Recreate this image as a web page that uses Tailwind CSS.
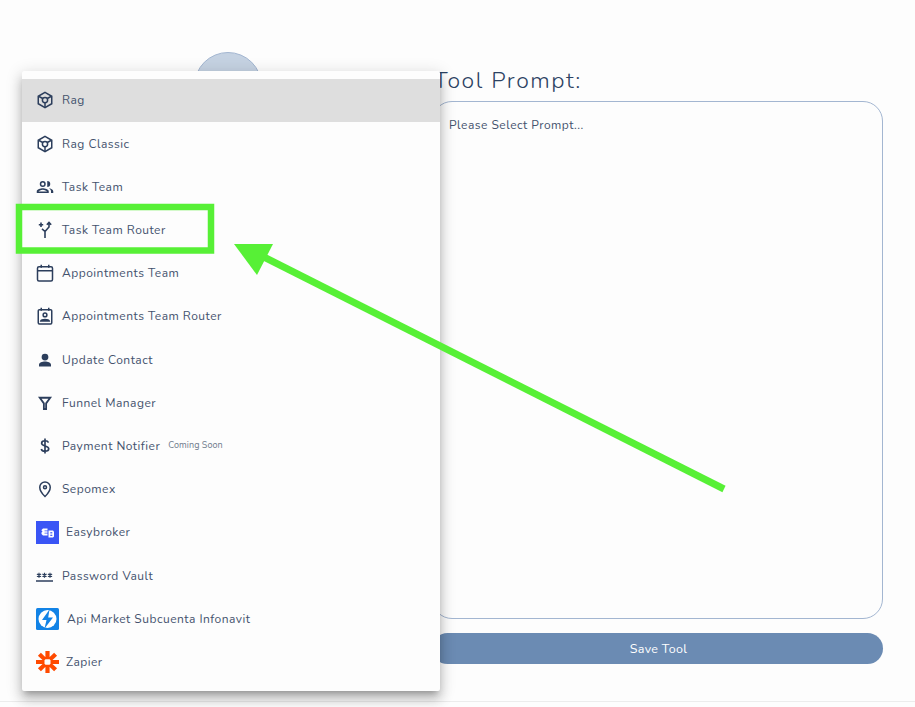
<!DOCTYPE html>
<html lang="en">
<head>
<meta charset="utf-8">
<title>Tool</title>
<script src="https://cdn.jsdelivr.net/npm/@tailwindcss/browser@4"></script>
</head>
<body class="bg-[#fdfdfd] font-['Nunito','Open_Sans','Noto_Sans',sans-serif] text-[#44526d] overflow-hidden">
<div class="relative w-[915px] h-[707px] overflow-hidden">

  <!-- page behind the menu -->
  <main class="h-[702px] border-b border-[#ececec] flex pt-[52px]">
    <div class="w-[432px] flex justify-end pr-[170px] shrink-0">
      <div class="w-[68px] h-[68px] rounded-full bg-[#c5d2e2] border border-[#a3b6d1]"></div>
    </div>
    <div class="w-[451px] flex flex-col">
      <h2 class="ml-[2px] mt-[12px] h-[37px] text-[23px] leading-[33px] font-light tracking-[1.55px] text-[#2c4263]">Tool Prompt:</h2>
      <div class="h-[518px] rounded-[20px] border border-[#a3b6d1] pl-[16px] pr-[17px] py-[14px] text-[12px] leading-[18px] tracking-[0.48px]">Please Select Prompt...</div>
      <button class="mt-[14px] h-[31px] pl-[2px] pt-[1px] rounded-full bg-[#6b8bb3] text-white text-[12.5px] tracking-[0.3px]">Save Tool</button>
    </div>
  </main>

  <!-- dropdown -->
  <ul class="absolute left-[22px] top-[71px] w-[418px] h-[620px] pt-[7.9px] bg-[#fdfdfd] rounded-[2px] shadow-[0_5px_6px_-3px_rgba(0,0,0,0.25),0_9px_12px_1px_rgba(0,0,0,0.16),0_3px_16px_2px_rgba(0,0,0,0.12)] text-[12px] tracking-[0.48px]">
    <li class="h-[43.2px] flex items-center pl-[14px] gap-[8px] bg-[#dedede]">
      <svg class="w-[18px] h-[18px]" viewBox="0 0 24 24" fill="none" stroke="#2c3e5c" stroke-width="2"><path d="M12 1.800l9 5.200v10l-9 5.200L3 17V7z"/><circle cx="12" cy="12" r="3.500"/><path d="M12 15.500v6M9 10L4 7.300M15 10l5-2.700"/></svg>
      <span>Rag</span>
    </li>
    <li class="h-[43.2px] flex items-center pl-[14px] gap-[8px]">
      <svg class="w-[18px] h-[18px]" viewBox="0 0 24 24" fill="none" stroke="#2c3e5c" stroke-width="2"><path d="M12 1.800l9 5.200v10l-9 5.200L3 17V7z"/><circle cx="12" cy="12" r="3.500"/><path d="M12 15.500v6M9 10L4 7.300M15 10l5-2.700"/></svg>
      <span>Rag Classic</span>
    </li>
    <li class="h-[43.2px] flex items-center pl-[14px] gap-[8px]">
      <svg class="w-[18px] h-[18px]" viewBox="0 0 24 24" fill="#2c3e5c"><path d="M9 12a4 4 0 1 0 0-8 4 4 0 0 0 0 8zm0-6a2 2 0 1 1 0 4 2 2 0 0 1 0-4zM9 13.500c-2.700 0-8 1.300-8 4V20h16v-2.500c0-2.700-5.300-4-8-4zM3.300 18c.6-.9 3.300-2.500 5.700-2.500s5.100 1.600 5.700 2.500zM15 4v8a4 4 0 0 0 0-8zM17 13.600c1.700.9 3 2.200 3 3.900V20h3v-2.500c0-2.200-3.300-3.500-6-3.900z"/></svg>
      <span>Task Team</span>
    </li>
    <li class="h-[43.2px] flex items-center pl-[14px] gap-[8px]">
      <svg class="w-[18px] h-[18px]" viewBox="0 0 18 18" fill="none" stroke="#2c3e5c" stroke-width="1.600"><path d="M9 17v-6.500l4-4.500V1.500M10.800 3.800L13 1.500l2.200 2.300M9 10.500L6 7.800M5 1.500v4.400M2.800 3.700h4.400"/></svg>
      <span>Task Team Router</span>
    </li>
    <li class="h-[43.2px] flex items-center pl-[14px] gap-[8px]">
      <svg class="w-[18px] h-[18px]" viewBox="0 0 24 24" fill="none" stroke="#2c3e5c" stroke-width="2"><rect x="2" y="3.500" width="20" height="19" rx="2"/><path d="M2 9h20M7 1v4M17 1v4"/></svg>
      <span>Appointments Team</span>
    </li>
    <li class="h-[43.2px] flex items-center pl-[14px] gap-[8px]">
      <svg class="w-[18px] h-[18px]" viewBox="0 0 24 24" fill="none" stroke="#2c3e5c" stroke-width="2"><rect x="3" y="3.500" width="18" height="19" rx="1.500"/><path d="M7 1v4M17 1v4"/><circle cx="12" cy="10.500" r="2.500"/><path d="M6.500 18.500c1-2.500 10-2.500 11 0z" fill="#2c3e5c"/></svg>
      <span>Appointments Team Router</span>
    </li>
    <li class="h-[43.2px] flex items-center pl-[14px] gap-[8px]">
      <svg class="w-[18px] h-[18px]" viewBox="0 0 24 24" fill="#2c3e5c"><circle cx="12" cy="8" r="4.500"/><path d="M12 14c-3.500 0-8 1.600-8 4.300V20.500h16v-2.200c0-2.700-4.500-4.300-8-4.300z"/></svg>
      <span>Update Contact</span>
    </li>
    <li class="h-[43.2px] flex items-center pl-[14px] gap-[8px]">
      <svg class="w-[18px] h-[18px]" viewBox="0 0 24 24" fill="none" stroke="#2c3e5c" stroke-width="2.400"><path d="M5 5h14l-5.500 7.500V20h-3v-7.500z"/></svg>
      <span>Funnel Manager</span>
    </li>
    <li class="h-[43.2px] flex items-center pl-[14px] gap-[8px]">
      <svg class="w-[18px] h-[18px]" viewBox="0 0 24 24" fill="none" stroke="#2c3e5c" stroke-width="2.200"><path d="M12 2v20M16.500 7.500C16 5.800 14.500 5 12 5 9.300 5 7.500 6.300 7.500 8.300c0 4.700 9.500 2.500 9.500 7.400 0 2-2 3.300-5 3.300-2.700 0-4.500-1-5-3"/></svg>
      <span>Payment Notifier</span>
      <span class="text-[9px] tracking-[0.05px] text-[#6f7b8c]">Coming Soon</span>
    </li>
    <li class="h-[43.2px] flex items-center pl-[14px] gap-[8px]">
      <svg class="w-[18px] h-[18px]" viewBox="0 0 24 24" fill="none" stroke="#2c3e5c" stroke-width="2"><path d="M12 22s-7-7-7-12.500a7 7 0 0 1 14 0C19 15 12 22 12 22z"/><circle cx="12" cy="9.500" r="2"/></svg>
      <span>Sepomex</span>
    </li>
    <li class="h-[43.2px] flex items-center pl-[14px] gap-[7px]">
      <svg class="w-[23px] h-[23px]" viewBox="0 0 23 23"><rect width="23" height="23" fill="#3a55f5"/><path d="M7 7.500h4.500v2H8.500v.700h3v1.600h-3v.700h3v2H7l-1.500-1.500v-1.500l1-1-1-1V9z" fill="#fff"/><path d="M12.500 9.500H17l1 1v5l-1 1h-4.500z" fill="#fff"/><rect x="14.300" y="11.200" width="2" height="1.200" fill="#3a55f5"/><rect x="14.300" y="13.700" width="2" height="1.200" fill="#3a55f5"/></svg>
      <span>Easybroker</span>
    </li>
    <li class="h-[43.2px] flex items-center pl-[14px] gap-[9px]">
      <svg class="w-[17px] h-[18px]" viewBox="0 0 17 18" fill="none" stroke="#2c3e5c"><path d="M0 14h17" stroke-width="1.500"/><path d="M3 5.800v5M.9 7l4.200 2.400M5.100 7L.9 9.400M8.500 5.800v5M6.400 7l4.200 2.400M10.600 7L6.400 9.400M14 5.800v5M11.900 7l4.200 2.400M16.100 7l-4.200 2.400" stroke-width="1.200"/></svg>
      <span>Password Vault</span>
    </li>
    <li class="h-[43.2px] flex items-center pl-[14px] gap-[8px]">
      <svg class="w-[23px] h-[22px]" viewBox="0 0 23 22"><rect width="23" height="22" rx="1.500" fill="#1283e6"/><circle cx="11.500" cy="11" r="9" fill="#fff"/><path d="M13.500 1.500L6 12h4.500L8.500 20.500 17 9.500h-4.800z" fill="#1283e6"/></svg>
      <span>Api Market Subcuenta Infonavit</span>
    </li>
    <li class="h-[43.2px] flex items-center pl-[14px] gap-[7px]">
      <svg class="w-[23px] h-[22px]" viewBox="0 0 23 23" preserveAspectRatio="none" fill="none" stroke="#ff4a00" stroke-width="4.200"><path d="M11.500 0v8.500M11.500 14.500v8.500M0 11.500h8.500M14.500 11.500h8.500M3.400 3.400l5.700 5.700M13.900 13.900l5.700 5.700M19.600 3.400l-5.700 5.700M9.100 13.900l-5.700 5.700"/></svg>
      <span>Zapier</span>
    </li>
  </ul>

  <!-- annotation drawn on top of the screenshot -->
  <svg class="absolute inset-0 pointer-events-none" width="915" height="707" viewBox="0 0 915 707">
    <rect x="19" y="207" width="192" height="43.500" fill="none" stroke="#57f036" stroke-width="6.500"/>
    <path d="M262 256L724 489" stroke="#57f036" stroke-width="7" fill="none"/>
    <path d="M234 244H273L257 275z" fill="#57f036"/>
  </svg>
</div>
</body>
</html>
